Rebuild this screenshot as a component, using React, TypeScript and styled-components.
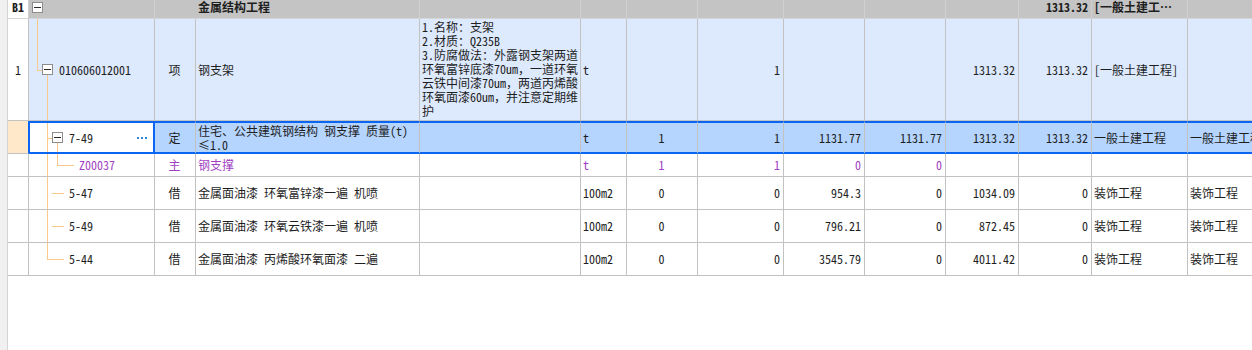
import { Fragment } from 'react';
import styled, { createGlobalStyle } from 'styled-components';

const LINE = '#c2c2c2';
const TREE = '#f7c98b';
const BLUE = '#0a66f2';
const PURPLE = '#a23fc4';

const GlobalStyle = createGlobalStyle`
  html, body {
    margin: 0;
    padding: 0;
    background: #fff;
  }
  body {
    font-family: "Noto Sans CJK SC", "Liberation Sans", sans-serif;
    font-feature-settings: "hwid" 1;
    font-size: 12px;
    color: #1e1e1e;
    overflow: hidden;
  }
`;

// column widths incl. right border
const W = [21, 126, 41, 224, 161, 46, 71, 86, 81, 81, 73, 73, 96, 120];

type Align = 'left' | 'center' | 'right';
type GuideKind = 'none' | 'pass' | 'tee' | 'last';

const Page = styled.div`
  display: flex;
  width: 1252px;
  height: 350px;
  overflow: hidden;
`;

const Gutter = styled.div`
  flex: none;
  width: 8px;
  background: #f0f0f0;
  border-right: 1px solid #d4d4d4;
  box-sizing: border-box;
`;

const Grid = styled.div`
  display: flex;
  flex-direction: column;
  flex: none;
`;

const Row = styled.div<{ $h: number; $bg?: string }>`
  display: flex;
  height: ${(p) => p.$h}px;
  background: ${(p) => p.$bg || '#fff'};
`;

const Cell = styled.div<{
  $w: number;
  $align?: Align;
  $top?: boolean;
  $bg?: string;
  $sel?: boolean;
  $head?: boolean;
  $bold?: boolean;
  $color?: string;
}>`
  flex: none;
  box-sizing: border-box;
  width: ${(p) => p.$w}px;
  height: 100%;
  display: flex;
  align-items: ${(p) => (p.$top ? 'flex-start' : 'center')};
  justify-content: ${(p) =>
    p.$align === 'right' ? 'flex-end' : p.$align === 'center' ? 'center' : 'flex-start'};
  padding: ${(p) => (p.$top ? '1px' : '0')} 3px ${(p) => (p.$head ? '4px' : '0')} 2px;
  background: ${(p) => p.$bg || 'transparent'};
  border-right: 1px solid ${(p) => (p.$head ? '#d0d0d0' : LINE)};
  border-bottom: 1px solid ${(p) => (p.$head ? '#d6d6d6' : LINE)};
  ${(p) => (p.$sel ? `border-top: 2px solid ${BLUE}; border-bottom: 2px solid ${BLUE};` : '')}
  font-weight: ${(p) => (p.$bold ? 700 : 400)};
  color: ${(p) => p.$color || 'inherit'};
  white-space: nowrap;
  line-height: 14px;
  overflow: ${(p) => (p.$head ? 'visible' : 'hidden')};
`;

const NumCell = styled(Cell)<{ $mark?: boolean }>`
  justify-content: center;
  padding: 0 0 ${(p) => (p.$head ? '4px' : '0')} 0;
  background: ${(p) => (p.$mark ? '#ffe7c9' : '#fff')};
  ${(p) => (p.$mark ? `border-right-color: ${BLUE};` : '')}
`;

const CodeCell = styled(Cell)<{ $focus?: boolean }>`
  align-items: stretch;
  padding: 0 0 ${(p) => (p.$head ? '4px' : '0')} ${(p) => (p.$focus ? '2px' : '3px')};
  ${(p) =>
    p.$focus
      ? `background: #fff; border-left: 1px solid ${BLUE}; border-right: 2px solid ${BLUE};`
      : ''}
`;

const Guide = styled.span<{ $kind: GuideKind }>`
  position: relative;
  flex: none;
  width: 10px;

  &::before {
    content: '';
    position: absolute;
    left: 5px;
    top: 0;
    width: 1px;
    height: ${(p) => (p.$kind === 'last' ? '50%' : '100%')};
    background: ${TREE};
    display: ${(p) => (p.$kind === 'none' ? 'none' : 'block')};
  }

  &::after {
    content: '';
    position: absolute;
    left: 5px;
    right: 0;
    top: 50%;
    height: 1px;
    background: ${TREE};
    display: ${(p) => (p.$kind === 'tee' || p.$kind === 'last' ? 'block' : 'none')};
  }
`;

const ToggleSlot = styled.span<{ $kids?: boolean }>`
  position: relative;
  flex: none;
  width: 12px;
  display: flex;
  align-items: center;

  &::after {
    content: '';
    position: absolute;
    left: 5px;
    top: 50%;
    bottom: 0;
    width: 1px;
    background: ${TREE};
    display: ${(p) => (p.$kids ? 'block' : 'none')};
  }
`;

const ToggleBox = styled.span`
  position: relative;
  z-index: 1;
  box-sizing: border-box;
  width: 11px;
  height: 11px;
  border: 1px solid #8c8c8c;
  background: #fff;
  display: flex;
  align-items: center;
  justify-content: center;

  &::before {
    content: '';
    width: 7px;
    height: 1px;
    background: #2a2a2a;
  }
`;

const LeafStub = styled.span`
  position: relative;
  flex: none;
  width: 12px;

  &::after {
    content: '';
    position: absolute;
    left: 0;
    right: 0;
    top: 50%;
    height: 1px;
    background: ${TREE};
  }
`;

const Code = styled.span<{ $color?: string }>`
  align-self: center;
  margin-left: 5px;
  color: ${(p) => p.$color || 'inherit'};
`;

const MoreDots = styled.span`
  align-self: center;
  margin-left: auto;
  margin-right: 6px;
  width: 10px;
  height: 2px;
  background: repeating-linear-gradient(to right, #2f86dc 0 2px, transparent 2px 4px);
`;

const Lines = styled.div`
  display: flex;
  flex-direction: column;
`;

// full-width punctuation keeps its full width
const Wide = styled.span`
  font-feature-settings: normal;
`;

const T = ({ children }: { children: string }) => (
  <>
    {children.split(/([\uff01-\uff5e\u2026])/).map((part, i) =>
      i % 2 ? <Wide key={i}>{part}</Wide> : <Fragment key={i}>{part}</Fragment>,
    )}
  </>
);

const Tree = ({ guides, toggle, kids }: { guides: GuideKind[]; toggle?: boolean; kids?: boolean }) => (
  <>
    {guides.map((g, i) => (
      <Guide key={i} $kind={g} />
    ))}
    {toggle ? (
      <ToggleSlot $kids={kids}>
        <ToggleBox />
      </ToggleSlot>
    ) : (
      <LeafStub />
    )}
  </>
);

const description = [
  '1.名称：支架',
  '2.材质：Q235B',
  '3.防腐做法：外露钢支架两道',
  '环氧富锌底漆70um，一道环氧',
  '云铁中间漆70um，两道丙烯酸',
  '环氧面漆60um，并注意定期维',
  '护',
];

const subItems = [
  { code: '5-47', name: '金属面油漆 环氧富锌漆一遍 机喷', price: '954.3', total: '1034.09', last: false },
  { code: '5-49', name: '金属面油漆 环氧云铁漆一遍 机喷', price: '796.21', total: '872.45', last: false },
  { code: '5-44', name: '金属面油漆 丙烯酸环氧面漆 二遍', price: '3545.79', total: '4011.42', last: true },
];

const App = () => {
  const HEAD = '#c4c4c4';

  return (
    <Page>
      <GlobalStyle />
      <Gutter />
      <Grid>
        {/* section header */}
        <Row $h={19} $bg={HEAD}>
          <NumCell $w={W[0]} $head $bold>
            B1
          </NumCell>
          <CodeCell $w={W[1]} $head>
            <ToggleSlot $kids>
              <ToggleBox />
            </ToggleSlot>
          </CodeCell>
          <Cell $w={W[2] + W[3]} $head $bold style={{ paddingLeft: 43 }}>
            金属结构工程
          </Cell>
          {[4, 5, 6, 7, 8, 9, 10].map((c) => (
            <Cell key={c} $w={W[c]} $head />
          ))}
          <Cell $w={W[11]} $head $bold $align="right">
            1313.32
          </Cell>
          <Cell $w={W[12]} $head $bold>
            <T>[一般土建工…</T>
          </Cell>
          <Cell $w={W[13]} $head />
        </Row>

        {/* bill item */}
        <Row $h={102} $bg="#dde9fd">
          <NumCell $w={W[0]}>1</NumCell>
          <CodeCell $w={W[1]}>
            <Tree guides={['last']} toggle kids />
            <Code>010606012001</Code>
          </CodeCell>
          <Cell $w={W[2]} $align="center">项</Cell>
          <Cell $w={W[3]}>钢支架</Cell>
          <Cell $w={W[4]} $top>
            <Lines>
              {description.map((l) => (
                <span key={l}>
                  <T>{l}</T>
                </span>
              ))}
            </Lines>
          </Cell>
          <Cell $w={W[5]}>t</Cell>
          <Cell $w={W[6]} />
          <Cell $w={W[7]} $align="right">1</Cell>
          <Cell $w={W[8]} />
          <Cell $w={W[9]} />
          <Cell $w={W[10]} $align="right">1313.32</Cell>
          <Cell $w={W[11]} $align="right">1313.32</Cell>
          <Cell $w={W[12]}>[一般土建工程]</Cell>
          <Cell $w={W[13]} />
        </Row>

        {/* selected quota row */}
        <Row $h={33} $bg="#b5d5fe">
          <NumCell $w={W[0]} $mark />
          <CodeCell $w={W[1]} $sel $focus>
            <Tree guides={['none', 'tee']} toggle kids />
            <Code>7-49</Code>
            <MoreDots />
          </CodeCell>
          <Cell $w={W[2]} $sel $align="center">定</Cell>
          <Cell $w={W[3]} $sel $top>
            <Lines>
              <span>住宅、公共建筑钢结构 钢支撑 质量(t)</span>
              <span>≤1.0</span>
            </Lines>
          </Cell>
          <Cell $w={W[4]} $sel />
          <Cell $w={W[5]} $sel>t</Cell>
          <Cell $w={W[6]} $sel $align="center">1</Cell>
          <Cell $w={W[7]} $sel $align="right">1</Cell>
          <Cell $w={W[8]} $sel $align="right">1131.77</Cell>
          <Cell $w={W[9]} $sel $align="right">1131.77</Cell>
          <Cell $w={W[10]} $sel $align="right">1313.32</Cell>
          <Cell $w={W[11]} $sel $align="right">1313.32</Cell>
          <Cell $w={W[12]} $sel>一般土建工程</Cell>
          <Cell $w={W[13]} $sel>一般土建工程</Cell>
        </Row>

        {/* main material */}
        <Row $h={23}>
          <NumCell $w={W[0]} />
          <CodeCell $w={W[1]}>
            <Tree guides={['none', 'pass', 'last']} />
            <Code $color={PURPLE}>Z00037</Code>
          </CodeCell>
          <Cell $w={W[2]} $align="center" $color={PURPLE}>主</Cell>
          <Cell $w={W[3]} $color={PURPLE}>钢支撑</Cell>
          <Cell $w={W[4]} />
          <Cell $w={W[5]} $color={PURPLE}>t</Cell>
          <Cell $w={W[6]} $align="center" $color={PURPLE}>1</Cell>
          <Cell $w={W[7]} $align="right" $color={PURPLE}>1</Cell>
          <Cell $w={W[8]} $align="right" $color={PURPLE}>0</Cell>
          <Cell $w={W[9]} $align="right" $color={PURPLE}>0</Cell>
          <Cell $w={W[10]} />
          <Cell $w={W[11]} />
          <Cell $w={W[12]} />
          <Cell $w={W[13]} />
        </Row>

        {subItems.map((it) => (
          <Row key={it.code} $h={33}>
            <NumCell $w={W[0]} />
            <CodeCell $w={W[1]}>
              <Tree guides={['none', it.last ? 'last' : 'pass']} />
              <Code>{it.code}</Code>
            </CodeCell>
            <Cell $w={W[2]} $align="center">借</Cell>
            <Cell $w={W[3]}>{it.name}</Cell>
            <Cell $w={W[4]} />
            <Cell $w={W[5]}>100m2</Cell>
            <Cell $w={W[6]} $align="center">0</Cell>
            <Cell $w={W[7]} $align="right">0</Cell>
            <Cell $w={W[8]} $align="right">{it.price}</Cell>
            <Cell $w={W[9]} $align="right">0</Cell>
            <Cell $w={W[10]} $align="right">{it.total}</Cell>
            <Cell $w={W[11]} $align="right">0</Cell>
            <Cell $w={W[12]}>装饰工程</Cell>
            <Cell $w={W[13]}>装饰工程</Cell>
          </Row>
        ))}
      </Grid>
    </Page>
  );
};

export default App;
